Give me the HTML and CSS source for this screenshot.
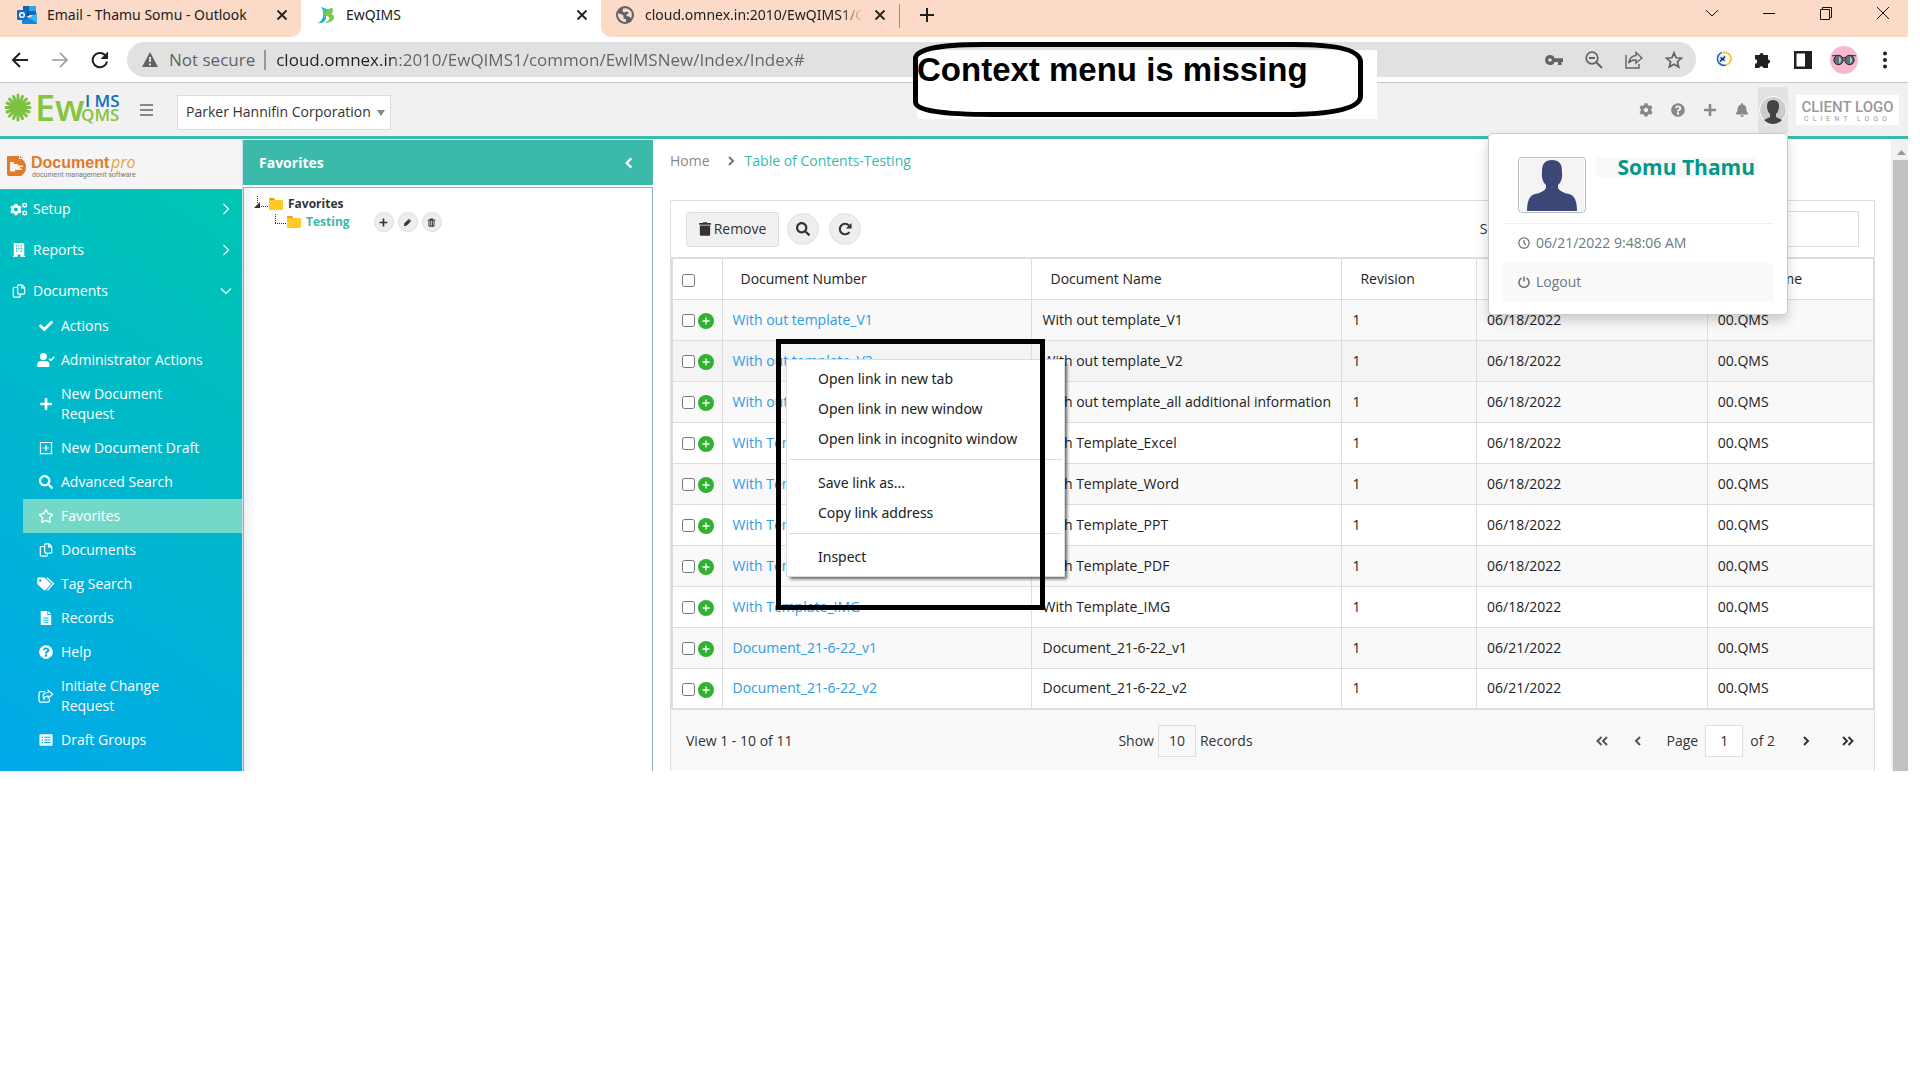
FILE: index.html
```html
<!DOCTYPE html>
<html lang="en">
<head>
    <meta charset="UTF-8">
    <meta name="viewport" content="width=device-width, initial-scale=1.0">
    <title>EwQIMS</title>
    <link rel="stylesheet" href="styles.css">
</head>
<body>
    <svg class="sprite" aria-hidden="true">
        <symbol id="i-plus" viewBox="0 0 448 512"><path d="M416 208H272V64c0-17.67-14.33-32-32-32h-32c-17.67 0-32 14.33-32 32v144H32c-17.67 0-32 14.33-32 32v32c0 17.67 14.33 32 32 32h144v144c0 17.67 14.33 32 32 32h32c17.67 0 32-14.33 32-32V304h144c17.67 0 32-14.33 32-32v-32c0-17.67-14.33-32-32-32z"/></symbol>
        <symbol id="i-check" viewBox="0 0 512 512"><path d="M173.898 439.404l-166.4-166.4c-9.997-9.997-9.997-26.206 0-36.204l36.203-36.204c9.997-9.998 26.207-9.998 36.204 0L192 312.69 432.095 72.596c9.997-9.997 26.207-9.997 36.204 0l36.203 36.204c9.997 9.997 9.997 26.206 0 36.204l-294.4 294.401c-9.998 9.997-26.207 9.997-36.204-.001z"/></symbol>
        <symbol id="i-search" viewBox="0 0 512 512"><path d="M505 442.7L405.3 343c-4.5-4.5-10.6-7-17-7H372c27.6-35.3 44-79.7 44-128C416 93.1 322.9 0 208 0S0 93.1 0 208s93.1 208 208 208c48.3 0 92.7-16.4 128-44v16.3c0 6.4 2.5 12.5 7 17l99.7 99.7c9.4 9.4 24.6 9.4 33.9 0l28.3-28.3c9.4-9.4 9.4-24.6.1-34zM208 336c-70.7 0-128-57.2-128-128 0-70.7 57.2-128 128-128 70.7 0 128 57.2 128 128 0 70.7-57.2 128-128 128z"/></symbol>
        <symbol id="i-help" viewBox="0 0 512 512"><path d="M504 256c0 136.997-111.043 248-248 248S8 392.997 8 256C8 119.083 119.043 8 256 8s248 111.083 248 248zM262.655 90c-54.497 0-89.255 22.957-116.549 63.758-3.536 5.286-2.353 12.415 2.715 16.258l34.699 26.31c5.205 3.947 12.621 3.008 16.665-2.122 17.864-22.658 30.113-35.797 57.303-35.797 20.429 0 45.698 13.148 45.698 32.958 0 14.976-12.363 22.667-32.534 33.976C247.128 238.528 216 254.941 216 296v4c0 6.627 5.373 12 12 12h56c6.627 0 12-5.373 12-12v-1.333c0-28.462 83.186-29.647 83.186-106.667 0-58.002-60.165-102-116.531-102zM256 338c-25.365 0-46 20.635-46 46 0 25.364 20.635 46 46 46s46-20.636 46-46c0-25.365-20.635-46-46-46z"/></symbol>
        <symbol id="i-cog" viewBox="0 0 512 512"><path d="M487.4 315.7l-42.6-24.6c4.3-23.2 4.3-47 0-70.2l42.6-24.6c4.9-2.8 7.1-8.6 5.5-14-11.1-35.6-30-67.8-54.7-94.6-3.8-4.1-10-5.1-14.8-2.3L380.8 110c-17.9-15.4-38.5-27.3-60.8-35.1V25.8c0-5.6-3.9-10.5-9.4-11.7-36.7-8.2-74.3-7.8-109.2 0-5.5 1.2-9.4 6.1-9.4 11.7V75c-22.2 7.9-42.8 19.8-60.8 35.1L88.7 85.5c-4.9-2.8-11-1.9-14.8 2.3-24.7 26.7-43.6 58.9-54.7 94.6-1.7 5.4.6 11.2 5.5 14L67.3 221c-4.3 23.2-4.3 47 0 70.2l-42.6 24.6c-4.9 2.8-7.1 8.6-5.5 14 11.1 35.6 30 67.8 54.7 94.6 3.8 4.1 10 5.1 14.8 2.3l42.6-24.6c17.9 15.4 38.5 27.3 60.8 35.1v49.2c0 5.6 3.9 10.5 9.4 11.7 36.7 8.2 74.3 7.8 109.2 0 5.5-1.2 9.4-6.1 9.4-11.7v-49.2c22.2-7.9 42.8-19.8 60.8-35.1l42.6 24.6c4.9 2.8 11 1.9 14.8-2.3 24.7-26.7 43.6-58.9 54.7-94.6 1.5-5.5-.7-11.3-5.6-14.1zM256 336c-44.1 0-80-35.9-80-80s35.9-80 80-80 80 35.9 80 80-35.9 80-80 80z"/></symbol>
        <symbol id="i-bell" viewBox="0 0 448 512"><path d="M224 512c35.32 0 63.97-28.65 63.97-64H160.03c0 35.35 28.65 64 63.97 64zm215.39-149.71c-19.32-20.76-55.47-51.99-55.47-154.29 0-77.7-54.48-139.9-127.94-155.16V32c0-17.67-14.32-32-31.98-32s-31.98 14.33-31.98 32v20.84C118.56 68.1 64.08 130.3 64.08 208c0 102.3-36.15 133.53-55.47 154.29-6 6.45-8.66 14.16-8.61 21.71.11 16.4 12.98 32 32.1 32h383.8c19.12 0 32-15.6 32.1-32 .05-7.55-2.61-15.27-8.61-21.71z"/></symbol>
        <symbol id="i-star" viewBox="0 0 576 512"><path d="M528.1 171.5L382 150.2 316.7 17.8c-11.7-23.6-45.6-23.9-57.4 0L194 150.2 47.9 171.5c-26.2 3.8-36.7 36.1-17.7 54.6l105.7 103-25 145.5c-4.5 26.3 23.2 46 46.4 33.7L288 439.6l130.7 68.7c23.2 12.2 50.9-7.4 46.4-33.7l-25-145.5 105.7-103c19-18.5 8.5-50.8-17.7-54.6zM388.6 312.3l23.7 138.4L288 385.4l-124.3 65.3 23.7-138.4-100.6-98 139-20.2 62.2-126 62.2 126 139 20.2-100.6 98z"/></symbol>
        <symbol id="i-trash" viewBox="0 0 448 512"><path d="M32 464a48 48 0 0 0 48 48h288a48 48 0 0 0 48-48V128H32zM432 32H312l-9.4-18.7A24 24 0 0 0 281.1 0H166.8a23.72 23.72 0 0 0-21.4 13.3L136 32H16A16 16 0 0 0 0 48v32a16 16 0 0 0 16 16h416a16 16 0 0 0 16-16V48a16 16 0 0 0-16-16z"/></symbol>
        <symbol id="i-bin" viewBox="0 0 12 12"><path d="M1 2h10v1.500H1zM4 .5h4V2H4z"/><path d="M2.600 4v7h6.800V4M4.900 4v7M7.200 4v7" fill="none" stroke="currentColor" stroke-width="1.300"/></symbol>
        <symbol id="i-pencil" viewBox="0 0 12 12"><path d="M1 11l1-4 6-6 3 3-6 6z"/><path d="M7 2l3 3" stroke="#eee" stroke-width=".8"/></symbol>
        <symbol id="i-cogs" viewBox="0 0 20 16"><path fill-rule="evenodd" d="M5 2h3l.4 1.8 1.3.7L11.500 4l1.500 2.500-1.300 1.300v1.400l1.300 1.300-1.500 2.500-1.800-.5-1.300.7L8 15H5l-.4-1.800-1.300-.7L1.500 13 0 10.500l1.300-1.300V7.800L0 6.500 1.500 4l1.800.5 1.300-.7zM6.500 6.200a2.300 2.300 0 1 0 0 4.600 2.300 2.300 0 0 0 0-4.600zM16.500.5l1 .9 1.300-.1.6 1.300-.8 1 .8 1.100-.6 1.300-1.300-.1-1 .9-1-.9-1.300.1-.6-1.300.8-1.100-.8-1 .6-1.300 1.300.1zm0 2a1.200 1.200 0 1 0 0 2.400 1.200 1.200 0 0 0 0-2.400zM16.500 9.500l1 .9 1.300-.1.6 1.300-.8 1 .8 1.100-.6 1.300-1.300-.1-1 .9-1-.9-1.300.1-.6-1.300.8-1.100-.8-1 .6-1.300 1.300.1zm0 2a1.200 1.200 0 1 0 0 2.400 1.200 1.200 0 0 0 0-2.400z"/></symbol>
        <symbol id="i-building" viewBox="0 0 14 16"><path fill-rule="evenodd" d="M1 0h12v14.500h1V16H8.500v-3h-3v3H0v-1.500h1zM3.500 2.500V4H5V2.500zm5.500 0V4h1.500V2.500zM3.500 5.500V7H5V5.500zm5.500 0V7h1.500V5.500zM3.500 8.500V10H5V8.500zm5.500 0V10h1.500V8.500zM6.300 2.500V4h1.400V2.500zM6.300 5.500V7h1.400V5.500z"/></symbol>
        <symbol id="i-copy" viewBox="0 0 16 16"><path d="M6.500 1h5L14.500 4v6.500q0 1-1 1h-6q-1 0-1-1V2q0-1 1-1zM11 1v3.500h3.500M6 4H2.500q-1 0-1 1v9q0 1 1 1h6q1 0 1-1v-2" fill="none" stroke="currentColor" stroke-width="1.400"/></symbol>
        <symbol id="i-usercheck" viewBox="0 0 20 16"><path d="M7 0a4 4 0 1 1 0 8 4 4 0 0 1 0-8zM0 16v-2.500A4.500 4.500 0 0 1 4.500 9h5a4.500 4.500 0 0 1 4.500 4.500V16z"/><path d="M13.500 6.500l2 2 4-4.200" fill="none" stroke="currentColor" stroke-width="1.800"/></symbol>
        <symbol id="i-addbox" viewBox="0 0 16 16"><path d="M1.700 1.700h12.600v12.600H1.700zM8 4.500v7M4.500 8h7" fill="none" stroke="currentColor" stroke-width="1.400"/></symbol>
        <symbol id="i-tags" viewBox="0 0 20 16"><path fill-rule="evenodd" d="M0 1.500Q0 .5 1 .5h6.500l1 .4 7 6.400q.8.700 0 1.400l-6.200 6.400q-.8.700-1.500 0L.5 8.500 0 7.500zM3.500 2.500a1.400 1.400 0 1 0 0 2.800 1.400 1.400 0 0 0 0-2.800z"/><path d="M11 .8l7.500 6.800-6.800 7.600" fill="none" stroke="currentColor" stroke-width="1.400"/></symbol>
        <symbol id="i-file" viewBox="0 0 14 16"><path fill-rule="evenodd" d="M1 0h7.500v4.500H13V16H1zM4 7.500v1h6v-1zm0 2.500v1h6v-1zm0 2.500v1h6v-1z"/><path d="M9.500 0L13 3.500H9.500z"/></symbol>
        <symbol id="i-share" viewBox="0 0 18 16"><path d="M8 3H3Q1 3 1 5v8q0 2 2 2h8q2 0 2-2v-1.500" fill="none" stroke="currentColor" stroke-width="1.500"/><path d="M11.500 1.500l5.200 4.500-5.200 4.500V8q-4-.2-5 3.500Q3 4.500 11.500 4z" fill="none" stroke="currentColor" stroke-width="1.300"/></symbol>
        <symbol id="i-list" viewBox="0 0 16 16"><path fill-rule="evenodd" d="M1.500 1.500h13q1 0 1 1v11q0 1-1 1h-13q-1 0-1-1v-11q0-1 1-1zM3 4.300v1.500h1.600V4.300zm3 0v1.200h7.500V4.300zM3 7.300v1.500h1.600V7.300zm3 0v1.200h7.500V7.300zM3 10.300v1.500h1.600v-1.500zm3 0v1.200h7.500v-1.200z"/></symbol>
        <symbol id="i-right" viewBox="0 0 12 12"><path d="M3.500 1l5 5-5 5" fill="none" stroke="currentColor" stroke-width="1.100"/></symbol>
        <symbol id="i-rightb" viewBox="0 0 12 12"><path d="M4 2l4 4-4 4" fill="none" stroke="currentColor" stroke-width="2"/></symbol>
        <symbol id="i-leftb" viewBox="0 0 12 12"><path d="M8 2L4 6l4 4" fill="none" stroke="currentColor" stroke-width="2"/></symbol>
        <symbol id="i-last" viewBox="0 0 14 12"><path d="M2 2l4 4-4 4M7.500 2l4 4-4 4" fill="none" stroke="currentColor" stroke-width="2"/></symbol>
        <symbol id="i-first" viewBox="0 0 14 12"><path d="M6.500 2l-4 4 4 4M12 2L8 6l4 4" fill="none" stroke="currentColor" stroke-width="2"/></symbol>
        <symbol id="i-down" viewBox="0 0 12 12"><path d="M1 3.500l5 5 5-5" fill="none" stroke="currentColor" stroke-width="1.100"/></symbol>
        <symbol id="i-x" viewBox="0 0 12 12"><path d="M1.500 1.500l9 9M10.500 1.500l-9 9" fill="none" stroke="currentColor" stroke-width="1.800"/></symbol>
        <symbol id="i-reload" viewBox="0 0 18 18"><path d="M16 10.500A7.200 7.200 0 1 1 14 4" fill="none" stroke="currentColor" stroke-width="2"/><path d="M17 .5V8H9.500z"/></symbol>
        <symbol id="i-redo" viewBox="0 0 16 16"><path d="M13 11.500A6 6 0 1 1 12.500 4" fill="none" stroke="currentColor" stroke-width="2.400"/><path d="M15.500 1v6.500H9z"/></symbol>
        <symbol id="i-back" viewBox="0 0 18 18"><path d="M17 9H2.500M9 2L2 9l7 7" fill="none" stroke="currentColor" stroke-width="2"/></symbol>
        <symbol id="i-forward" viewBox="0 0 18 18"><path d="M1 9h14.500M9 2l7 7-7 7" fill="none" stroke="currentColor" stroke-width="1.600"/></symbol>
        <symbol id="i-folder" viewBox="0 0 14 12"><path fill="#f59b14" d="M0 1q0-1 1-1h4l1.500 2H13v3H0z"/><path fill="#ffc928" d="M0 2h13q1 0 1 1v8q0 1-1 1H1q-1 0-1-1z"/></symbol>
    </svg>

    <div class="page">
        <div class="tabstrip">
            <div class="tab tab-first">
                <svg class="fav" viewBox="0 0 20 18"><path fill="#1066b5" d="M6 0h13v9H6z"/><path fill="#28a8ea" d="M12 0h7v5h-7z"/><path fill="#0a4f96" d="M6 5h6v5H6z"/><path fill="#1487d4" d="M5 9l8 3 7-5v10q0 1-1 1H6q-1 0-1-1z"/><path fill="#35b8f1" d="M20 7v10l-8-5z"/><rect y="4" width="10" height="10" rx="1" fill="#0f6fc6"/><circle cx="5" cy="9" r="2.300" fill="none" stroke="#fff" stroke-width="1.500"/></svg>
                <span class="tab-title">Email - Thamu Somu - Outlook</span>
                <button class="tab-close" aria-label="Close tab"><svg><use href="#i-x"/></svg></button>
            </div>
            <div class="tab tab-active">
                <svg class="fav" viewBox="0 0 18 20"><path d="M1 0q5 2 5 8 0 8-6 11 7 1 9-5V3Q5 2 1 0z" fill="#16b5d8"/><path d="M5 2q5 3 11 0-1 5-9 6z" fill="#2cc6a8"/><path d="M7 8q4-4 9-6 2 4-1 7 3 1 3 5-3 5-11 5 5-2 6-5 0-2-3-3-2 0-3 3z" fill="#7cc850"/></svg>
                <span class="tab-title">EwQIMS</span>
                <button class="tab-close" aria-label="Close tab"><svg><use href="#i-x"/></svg></button>
            </div>
            <div class="tab tab-last">
                <svg class="fav" viewBox="0 0 18 18"><circle cx="9" cy="9" r="9" fill="#5f6368"/><path fill="#fcdac8" d="M2 7q2 1 4 1.500T7.500 11 10 13v3q-6 0-8-6zM7 2.500Q12 1 15.500 6q1 4-.5 6l-2-1.500-2.500-.5V8.500L13 7l-2-1.500-3 1L6.500 5z"/></svg>
                <span class="tab-title fade">cloud.omnex.in:2010/EwQIMS1/C</span>
                <button class="tab-close" aria-label="Close tab"><svg><use href="#i-x"/></svg></button>
            </div>
            <button class="new-tab" aria-label="New tab"><svg viewBox="0 0 16 16"><path d="M8 1v14M1 8h14" stroke="#202124" stroke-width="2"/></svg></button>
            <div class="window-buttons">
                <button aria-label="Search tabs"><svg viewBox="0 0 14 14"><path d="M1 4l6 6 6-6"/></svg></button>
                <button aria-label="Minimize"><svg viewBox="0 0 14 14"><path d="M1 7.500h12"/></svg></button>
                <button aria-label="Restore"><svg viewBox="0 0 14 14"><path d="M1.500 3.500h9v10h-9zM3.500 3V1.500h9v10H11"/></svg></button>
                <button aria-label="Close"><svg viewBox="0 0 14 14"><path d="M1 1l12 12M13 1L1 13"/></svg></button>
            </div>
        </div>

        <div class="toolbar">
            <div class="nav-buttons">
                <button aria-label="Back"><svg><use href="#i-back"/></svg></button>
                <button class="off" aria-label="Forward"><svg><use href="#i-forward"/></svg></button>
                <button aria-label="Reload"><svg><use href="#i-reload"/></svg></button>
            </div>
            <div class="omnibox">
                <svg class="warn" viewBox="0 0 16 15"><path fill="#5f6368" d="M8 0l8 15H0z"/><path d="M8 5v5M8 11.500v2" stroke="#fff" stroke-width="1.600"/></svg>
                <span class="not-secure">Not secure</span>
                <input class="url" aria-label="Address" value="cloud.omnex.in:2010/EwQIMS1/common/EwIMSNew/Index/Index#">
                <div class="omni-icons">
                    <button aria-label="Passwords"><svg viewBox="0 0 18 18"><path fill="currentColor" fill-rule="evenodd" d="M5 4a5 5 0 0 1 4.700 3.200H18V11h-1.500v3h-3.500v-3H9.700A5 5 0 1 1 5 4zm0 3.200a1.800 1.800 0 1 0 0 3.600 1.800 1.800 0 0 0 0-3.600z"/></svg></button>
                    <button aria-label="Zoom out"><svg viewBox="0 0 18 18"><path d="M11.500 11.500l5.500 5.500M4 7h6" stroke="currentColor" stroke-width="2"/><circle cx="7" cy="7" r="5.800" fill="none" stroke="currentColor" stroke-width="1.700"/></svg></button>
                    <button aria-label="Share"><svg viewBox="0 0 18 18"><path d="M1 4v13h13v-4M11 1.500L17 7l-6 5V9q-5-.5-7.500 3Q5 5 11 4.500z" fill="none" stroke="currentColor" stroke-width="1.400"/></svg></button>
                    <button aria-label="Bookmark"><svg viewBox="0 0 18 18"><path d="M9 1.800l2.100 5 5.400.4-4.100 3.500 1.300 5.300L9 13.200 4.300 16l1.300-5.300-4.100-3.500 5.400-.4z" fill="none" stroke="currentColor" stroke-width="1.700"/></svg></button>
                </div>
            </div>
            <div class="extensions">
                <button aria-label="Extension"><svg viewBox="0 0 18 18"><path d="M8 1.500A6.500 6.500 0 1 0 12 14" fill="none" stroke="#3367d6" stroke-width="1.800"/><path d="M9 1.500A6.500 6.500 0 0 1 12.500 14" fill="none" stroke="#fbc02d" stroke-width="1.800"/><circle cx="8.500" cy="8" r="4" fill="#c5ecf5"/><path d="M6 10.500l5-5M6.500 6.500l4 3" stroke="#222" stroke-width="1.200"/></svg></button>
                <button aria-label="Extensions"><svg viewBox="0 0 18 18"><path fill="#202124" d="M1 4h4.500a2 2 0 1 1 4 0H14v4.500a2 2 0 1 1 0 4.200V17h-4.500a2.200 2.200 0 0 0-4.300 0H1v-4.300a2.200 2.200 0 0 0 0-4.400z"/></svg></button>
                <button aria-label="Side panel"><svg viewBox="0 0 18 18"><path fill="#202124" fill-rule="evenodd" d="M0 0h18v18H0zM2.500 2.500v13H11v-13z"/></svg></button>
                <button class="profile" aria-label="Profile"><svg viewBox="0 0 28 28"><circle cx="14" cy="14" r="14" fill="#f8b8cf"/><path d="M2 10q3-1 6 0M26 10q-3-1-6 0M12 12q2-1 4 0" fill="none" stroke="#333" stroke-width="1.200"/><circle cx="8.500" cy="14" r="4.700" fill="#607078" stroke="#222"/><circle cx="19.500" cy="14" r="4.700" fill="#607078" stroke="#222"/><path d="M9 10.500a4 4 0 0 1 0 7zM20 10.500a4 4 0 0 1 0 7z" fill="#b4c4ca"/></svg></button>
                <button aria-label="Menu"><svg viewBox="0 0 18 18"><circle cx="9" cy="2.500" r="2"/><circle cx="9" cy="9" r="2"/><circle cx="9" cy="15.500" r="2"/></svg></button>
            </div>
        </div>

        <div class="app-header">
            <a class="logo" href="#">
                <svg viewBox="0 0 120 36">
                    <g stroke="#7cc142" stroke-width="3" stroke-linecap="round"><path d="M14 3v25M2 15.500h24M5.500 7l17 17M22.500 7l-17 17M9.500 4.500l9 22M18.500 4.500l-9 22M3 11l22 9M3 20l22-9"/></g>
                    <text x="31" y="29" class="logo-ew">Ew</text>
                    <text x="81" y="15" class="logo-ims">I MS</text>
                    <text x="77" y="29" class="logo-qms">QMS</text>
                </svg>
            </a>
            <button class="burger" aria-label="Toggle menu"><svg viewBox="0 0 13 12"><path d="M0 1h13M0 6h13M0 11h13" stroke="#888" stroke-width="2"/></svg></button>
            <div class="company">
                <select aria-label="Company"><option>Parker Hannifin Corporation</option></select>
            </div>
            <div class="header-icons">
                <button aria-label="Settings"><svg><use href="#i-cog"/></svg></button>
                <button aria-label="Help"><svg><use href="#i-help"/></svg></button>
                <button aria-label="Add"><svg><use href="#i-plus"/></svg></button>
                <button aria-label="Notifications"><svg><use href="#i-bell"/></svg></button>
            </div>
            <div class="user">
                <button class="user-button" aria-label="User"><svg viewBox="0 0 28 28"><circle cx="14" cy="14" r="13.500" fill="#ccc" stroke="#fff"/><path fill="#444" d="M8 10q0-6 6-6t6 6q0 5-3 8v3l6 3q-4 4-9 4t-9-4l6-3v-3q-3-3-3-8z"/></svg></button>
                <div class="user-menu">
                    <div class="user-top">
                        <svg class="photo" viewBox="0 0 64 52"><rect width="64" height="52" fill="#f4f4f4"/><path fill="#3b4877" d="M22 12q0-11 10-11t10 11q1 10-4 14v3q2 4 11 6 8 2 8 17H7q0-15 8-17 9-2 11-6v-3q-5-4-4-14z"/></svg>
                        <div class="user-name">Somu Thamu</div>
                    </div>
                    <div class="user-time">
                        <svg viewBox="0 0 12 12"><circle cx="6" cy="6" r="5.200" fill="none" stroke="#6b7a7f" stroke-width="1.300"/><path d="M6 3v3l2 2" fill="none" stroke="#6b7a7f" stroke-width="1.300"/></svg>
                        06/21/2022 9:48:06 AM
                    </div>
                    <a class="logout" href="#">
                        <svg viewBox="0 0 12 12"><path d="M3.500 2a5 5 0 1 0 5 0M6 .5v5" fill="none" stroke="#6b7a7f" stroke-width="1.600"/></svg>
                        Logout
                    </a>
                </div>
            </div>
            <div class="client-logo">
                <div class="client-big">CLIENT LOGO</div>
                <div class="client-small">CLIENT LOGO</div>
            </div>
        </div>

        <div class="layout">
            <div class="sidebar">
                <div class="product">
                    <svg viewBox="0 0 140 26">
                        <path fill="#e07a2c" d="M1 2h12v3h3q4 3 4 8 0 6-5 9H3q-2 0-2-2z"/><path fill="#e07a2c" d="M14 2l3 2h-3z"/><path fill="#fff" d="M4 8h4v2h4v1.500h5V13h-3v1.500h2V16H9v1.500H4z" opacity=".9"/>
                        <text x="25" y="14" class="doc">Document</text>
                        <text x="105" y="14" class="pro">pro</text>
                        <text x="26" y="23" class="sub">document management software</text>
                    </svg>
                </div>
                <div class="menu">
                    <a class="menu-item" href="#"><svg><use href="#i-cogs"/></svg><span>Setup</span><svg class="arrow"><use href="#i-right"/></svg></a>
                    <a class="menu-item" href="#"><svg><use href="#i-building"/></svg><span>Reports</span><svg class="arrow"><use href="#i-right"/></svg></a>
                    <a class="menu-item" href="#"><svg><use href="#i-copy"/></svg><span>Documents</span><svg class="arrow"><use href="#i-down"/></svg></a>
                </div>
                <div class="submenu">
                    <a href="#"><svg><use href="#i-check"/></svg><span>Actions</span></a>
                    <a href="#"><svg><use href="#i-usercheck"/></svg><span>Administrator Actions</span></a>
                    <a href="#"><svg><use href="#i-plus"/></svg><span>New Document Request</span></a>
                    <a href="#"><svg><use href="#i-addbox"/></svg><span>New Document Draft</span></a>
                    <a href="#"><svg><use href="#i-search"/></svg><span>Advanced Search</span></a>
                    <a class="active" href="#"><svg><use href="#i-star"/></svg><span>Favorites</span></a>
                    <a href="#"><svg><use href="#i-copy"/></svg><span>Documents</span></a>
                    <a href="#"><svg><use href="#i-tags"/></svg><span>Tag Search</span></a>
                    <a href="#"><svg><use href="#i-file"/></svg><span>Records</span></a>
                    <a href="#"><svg><use href="#i-help"/></svg><span>Help</span></a>
                    <a href="#"><svg><use href="#i-share"/></svg><span>Initiate Change Request</span></a>
                    <a href="#"><svg><use href="#i-list"/></svg><span>Draft Groups</span></a>
                </div>
            </div>

            <div class="tree-panel">
                <div class="tree-header">
                    <span>Favorites</span>
                    <button aria-label="Collapse"><svg><use href="#i-leftb"/></svg></button>
                </div>
                <div class="tree">
                    <div class="node">
                        <svg class="branch" viewBox="0 0 15 16"><path d="M3.500 0v8M7 10.500h8" stroke="#333" stroke-dasharray="1 1"/><path d="M6 6v6H0z" fill="#333"/></svg>
                        <svg class="folder"><use href="#i-folder"/></svg>
                        <span>Favorites</span>
                    </div>
                    <div class="node child">
                        <svg class="branch" viewBox="0 0 15 16"><path d="M3.500 0v9M3 9.500h12" stroke="#333" stroke-dasharray="1 1"/></svg>
                        <svg class="folder"><use href="#i-folder"/></svg>
                        <a href="#">Testing</a>
                        <div class="node-buttons">
                            <button aria-label="Add folder"><svg><use href="#i-plus"/></svg></button>
                            <button aria-label="Edit folder"><svg><use href="#i-pencil"/></svg></button>
                            <button aria-label="Delete folder"><svg><use href="#i-bin"/></svg></button>
                        </div>
                    </div>
                </div>
            </div>

            <div class="content">
                <div class="breadcrumb">
                    <a href="#">Home</a>
                    <svg><use href="#i-rightb"/></svg>
                    <span>Table of Contents-Testing</span>
                </div>
                <div class="grid">
                    <div class="grid-tools">
                        <button class="remove"><svg><use href="#i-trash"/></svg>Remove</button>
                        <button class="round" aria-label="Search"><svg><use href="#i-search"/></svg></button>
                        <button class="round" aria-label="Refresh"><svg><use href="#i-redo"/></svg></button>
                        <div class="search">
                            <label for="search">Search</label>
                            <input id="search" type="text">
                        </div>
                    </div>
                    <table>
                        <thead>
                            <tr><th class="c-check"><input type="checkbox" aria-label="Select all"></th><th class="c-num">Document Number</th><th class="c-name">Document Name</th><th class="c-rev">Revision</th><th class="c-date">Date</th><th>Level Name</th></tr>
                        </thead>
                        <tbody id="rows"></tbody>
                    </table>
                    <div class="grid-footer">
                        <div class="view">View 1 - 10 of 11</div>
                        <div class="show"><label for="size">Show</label><input id="size" value="10"><span>Records</span></div>
                        <div class="pager">
                            <button class="dim" aria-label="First page"><svg><use href="#i-first"/></svg></button>
                            <button class="dim" aria-label="Previous page"><svg><use href="#i-leftb"/></svg></button>
                            <label for="pg">Page</label>
                            <input id="pg" value="1">
                            <span>of 2</span>
                            <button aria-label="Next page"><svg><use href="#i-rightb"/></svg></button>
                            <button aria-label="Last page"><svg><use href="#i-last"/></svg></button>
                        </div>
                    </div>
                    <div class="context-menu">
                        <button>Open link in new tab</button>
                        <button>Open link in new window</button>
                        <button>Open link in incognito window</button>
                        <hr>
                        <button>Save link as...</button>
                        <button>Copy link address</button>
                        <hr>
                        <button>Inspect</button>
                    </div>
                    <div class="marker"></div>
                </div>
            </div>

            <div class="scrollbar">
                <svg viewBox="0 0 9 5"><path d="M0 5l4.500-5L9 5z" fill="#999"/></svg>
                <div class="thumb"></div>
            </div>
        </div>

        <div class="note">
            Context menu is missing
            <svg viewBox="0 0 450 75"><path d="M2.500 18Q0 2.500 70 2.500H380Q447.500 2.500 447.500 20V54Q447.500 72.500 370 72.500H80Q2.500 72.500 2.500 60z" fill="none" stroke="#000" stroke-width="5"/></svg>
        </div>
    </div>

    <script>
        const rows = [
            ['With out template_V1', '06/18/2022'],
            ['With out template_V2', '06/18/2022'],
            ['With out template_all additional information', '06/18/2022'],
            ['With Template_Excel', '06/18/2022'],
            ['With Template_Word', '06/18/2022'],
            ['With Template_PPT', '06/18/2022'],
            ['With Template_PDF', '06/18/2022'],
            ['With Template_IMG', '06/18/2022'],
            ['Document_21-6-22_v1', '06/21/2022'],
            ['Document_21-6-22_v2', '06/21/2022']
        ];

        document.getElementById('rows').innerHTML = rows.map(([name, date]) => `
            <tr>
                <td class="c-check"><input type="checkbox" aria-label="Select ${name}"><button class="expand" aria-label="Expand"><svg viewBox="0 0 16 16"><circle cx="8" cy="8" r="8" fill="#31b131"/><path d="M8 4.500v7M4.500 8h7" stroke="#fff" stroke-width="1.300"/></svg></button></td>
                <td><a href="#">${name}</a></td>
                <td>${name}</td>
                <td>1</td>
                <td>${date}</td>
                <td>00.QMS</td>
            </tr>`).join('');
    </script>
</body>
</html>
```
FILE: styles.css
```css
* {
    box-sizing: border-box;
}

body {
    margin: 0;
    background: #fff;
    color: #333;
    font-family: 'Open Sans', sans-serif;
    font-size: 14px;
    line-height: 20px;
}

button, input, select {
    font: inherit;
    color: inherit;
}

button {
    display: inline-flex;
    align-items: center;
    justify-content: center;
    padding: 0;
    border: 0;
    background: none;
}

a {
    color: inherit;
    text-decoration: none;
}

svg {
    display: block;
    flex: none;
    fill: currentColor;
}

.sprite {
    position: absolute;
    width: 0;
    height: 0;
}

.page {
    position: relative;
    margin-right: 12px;
}

/* browser tabs */
.tabstrip {
    display: flex;
    height: 37px;
    background: #fff;
    color: #202124;
}

.tab {
    display: flex;
    align-items: center;
    height: 37px;
    padding: 0 13px 8px 17px;
    background: #fcdac8;
    font-family: 'Noto Sans', sans-serif;
}

.tab-first {
    width: 301px;
    border-radius: 0 0 10px 0;
}

.tab-active {
    width: 300px;
    padding-left: 15px;
    background: #fff;
}

.tab-last {
    width: 298px;
    padding-left: 14px;
    border-radius: 0 0 0 10px;
}

.fav {
    width: 20px;
    height: 18px;
    margin-right: 10px;
}

.tab-title {
    flex: 1;
    overflow: hidden;
    white-space: nowrap;
}

.fade {
    mask-image: linear-gradient(90deg, #000 90%, transparent);
}

.tab-close {
    margin-left: 11px;
}

.tab-close svg {
    width: 12px;
    height: 12px;
}

.new-tab {
    width: 56px;
    padding-bottom: 8px;
    background: #fcdac8 linear-gradient(#9a8a82, #9a8a82) 0 4px / 1px 24px no-repeat;
}

.new-tab svg {
    width: 16px;
    height: 16px;
}

.window-buttons {
    flex: 1;
    display: flex;
    justify-content: flex-end;
    align-items: center;
    gap: 43px;
    padding: 0 18px 12px 0;
    background: #fcdac8;
}

.window-buttons svg {
    width: 14px;
    height: 14px;
    fill: none;
    stroke: #111;
}

/* address bar */
.toolbar {
    display: flex;
    align-items: center;
    height: 46px;
    padding: 0 14px 0 11px;
    border-bottom: 1px solid #c8c8c8;
    color: #202124;
}

.nav-buttons {
    display: flex;
    gap: 22px;
    width: 116px;
}

.nav-buttons svg {
    width: 18px;
    height: 18px;
}

.nav-buttons .off {
    color: #999;
}

.omnibox {
    flex: 1;
    display: flex;
    align-items: center;
    height: 35px;
    padding: 0 13px 0 15px;
    border-radius: 18px;
    background: #e1e1e1;
    color: #5f6368;
    font-size: 17px;
}

.warn {
    width: 16px;
    height: 15px;
    margin-right: 11px;
}

.not-secure {
    padding-right: 9px;
    border-right: 2px solid #999;
    white-space: nowrap;
}

.url {
    flex: 1;
    margin-left: 10px;
    padding: 0;
    border: 0;
    outline: 0;
    background: linear-gradient(90deg, #202124 119px, #5f6368 119px);
    background-clip: text;
    -webkit-text-fill-color: transparent;
}

.omni-icons {
    display: flex;
    gap: 22px;
}

.omni-icons svg,
.extensions svg {
    width: 18px;
    height: 18px;
}

.extensions {
    display: flex;
    align-items: center;
    gap: 22px;
    padding-left: 18px;
}

.extensions .profile {
    margin: 0 -4px;
}

.extensions .profile svg {
    width: 28px;
    height: 28px;
}

/* app header */
.app-header {
    display: flex;
    align-items: center;
    height: 56px;
    padding-right: 9px;
    background: #f1f1f1;
    border-bottom: 3px solid #3bb9ab;
}

.logo {
    width: 120px;
    margin-left: 4px;
}

.logo svg {
    width: 120px;
    height: 36px;
    overflow: visible;
}

.logo-ew {
    fill: #85c441;
    font: 600 36px 'Open Sans', sans-serif;
}

.logo-ims {
    fill: #0d70bb;
    font: 600 17px 'Open Sans', sans-serif;
}

.logo-qms {
    fill: #85c441;
    font: 600 17px 'Open Sans', sans-serif;
}

.burger {
    margin: 0 24px 0 16px;
}

.burger svg {
    width: 13px;
    height: 12px;
}

.company {
    display: flex;
    position: relative;
    margin-top: 5px;
}

.company select {
    width: 214px;
    height: 35px;
    padding: 0 8px;
    border: 1px solid #ddd;
    background: #fff;
    appearance: none;
}

.company::after {
    content: '';
    position: absolute;
    right: 6px;
    top: 15px;
    border: 4px solid transparent;
    border-top: 6px solid #888;
    pointer-events: none;
}

.header-icons {
    display: flex;
    gap: 18px;
    margin-left: auto;
    color: #888;
}

.header-icons svg {
    width: 14px;
    height: 14px;
}

.user {
    position: relative;
    margin: 0 8px 0 9px;
}

.user-button {
    width: 30px;
    height: 46px;
    background: #e2e2e2;
}

.user-button svg {
    width: 28px;
    height: 28px;
}

.user-menu {
    position: absolute;
    z-index: 2;
    top: 46px;
    right: 0;
    width: 300px;
    height: 182px;
    padding: 23px 14px 0;
    border: 1px solid #ccc;
    border-radius: 5px;
    background: #fff;
    box-shadow: 0 6px 12px rgba(0, 0, 0, 0.18);
    color: #6b7a7f;
}

.user-top {
    display: flex;
    justify-content: space-between;
    align-items: flex-start;
    height: 67px;
    padding: 0 18px 0 15px;
    border-bottom: 1px solid #eee;
}

.photo {
    width: 68px;
    height: 56px;
    padding: 1px;
    border: 1px solid #bbb;
    border-radius: 4px;
    background: #fff;
}

.user-name {
    padding-left: 21px;
    background: #faf9f8;
    color: #00998a;
    font-size: 21px;
    font-weight: 700;
}

.user-time,
.logout {
    display: flex;
    align-items: center;
    gap: 6px;
    height: 39px;
    padding-left: 15px;
}

.logout {
    background: #faf9f8;
}

.user-time svg,
.logout svg {
    width: 12px;
    height: 12px;
}

.client-logo {
    width: 103px;
    height: 30px;
    padding-top: 3px;
    background: #fff;
    color: #999;
    text-align: center;
    white-space: nowrap;
}

.client-big {
    font: 500 15px/18px Roboto, sans-serif;
}

.client-small {
    font: 7px/7px Roboto, sans-serif;
    letter-spacing: 4px;
}

/* page body */
.layout {
    display: flex;
    padding-top: 1px;
}

.sidebar {
    width: 242px;
    background: #00bcc8 linear-gradient(35deg, #00a9ea, #00b8cc 50%, #00c8ae);
    color: #fff;
    font-weight: 500;
}

.product {
    height: 50px;
    padding: 14px 0 0 6px;
    background: #f5f5f5;
    border-bottom: 1px solid #3bb9ab;
}

.product svg {
    width: 140px;
    height: 26px;
    overflow: visible;
}

.product .doc {
    fill: #e07a2c;
    font: bold 16px 'Liberation Sans', sans-serif;
}

.product .pro {
    fill: #e9a03b;
    font: italic 16px 'Open Sans', sans-serif;
}

.product .sub {
    fill: #777;
    font: 7px Roboto, sans-serif;
}

.menu-item {
    display: flex;
    align-items: center;
    height: 41px;
    padding: 0 10px 3px 9px;
}

.menu-item svg {
    width: 20px;
    height: 14px;
    margin-right: 4px;
}

.menu-item span {
    flex: 1;
}

.menu-item .arrow {
    width: 12px;
    height: 12px;
    margin: 0;
}

.submenu {
    margin-top: -4px;
    padding: 0 0 14px 23px;
}

.submenu a {
    display: flex;
    align-items: center;
    padding: 7px 60px 7px 14px;
    white-space: nowrap;
}

.submenu a:nth-child(3),
.submenu a:nth-child(11) {
    white-space: normal;
}

.submenu svg {
    width: 18px;
    height: 14px;
    margin-right: 6px;
}

.submenu .active {
    background: #74d8c8;
}

.tree-panel {
    display: flex;
    flex-direction: column;
    width: 411px;
    border-left: 1px solid #ccdcec;
}

.tree-header {
    display: flex;
    justify-content: space-between;
    align-items: center;
    height: 45px;
    padding: 0 17px 0 16px;
    background: #3bb9ab;
    color: #fff;
    font-weight: 700;
}

.tree-header svg {
    width: 14px;
    height: 14px;
}

.tree {
    flex: 1;
    margin-top: 2px;
    padding: 7px 10px;
    border: 1px solid #8fabcd;
    border-bottom: 0;
    box-shadow: inset 16px 0 14px -14px #e8e8e8;
    font-size: 12px;
    font-weight: 700;
}

.node {
    display: flex;
    align-items: center;
    height: 18px;
}

.child {
    padding-left: 18px;
    color: #3bb9ab;
}

.branch {
    width: 15px;
    height: 16px;
}

.folder {
    width: 14px;
    height: 12px;
    margin-right: 5px;
}

.node-buttons {
    display: flex;
    gap: 4px;
    margin-left: 24px;
}

.node-buttons button {
    width: 20px;
    height: 20px;
    border: 1px solid #ddd;
    border-radius: 50%;
    background: #eee;
    color: #333;
}

.node-buttons svg {
    width: 9px;
    height: 9px;
}

.content {
    flex: 1;
    padding: 10px 16px 0 17px;
}

.breadcrumb {
    display: flex;
    align-items: center;
    height: 22px;
    color: #888;
}

.breadcrumb svg {
    width: 12px;
    height: 12px;
    margin: 0 8px 0 15px;
    color: #777;
}

.breadcrumb span {
    color: #3bb9ab;
}

/* document grid */
.grid {
    position: relative;
    margin-top: 28px;
    border: 1px solid #ddd;
    border-bottom: 0;
}

.grid-tools {
    display: flex;
    align-items: center;
    height: 56px;
    padding: 0 15px;
}

.remove {
    width: 93px;
    height: 35px;
    margin-right: 8px;
    border: 1px solid #ddd;
    border-radius: 3px;
    background: #f1f1f1;
    gap: 3px;
}

.remove svg {
    width: 12px;
    height: 14px;
}

.round {
    width: 32px;
    height: 32px;
    margin-right: 10px;
    border: 1px solid #e0e0e8;
    border-radius: 50%;
    background: #eee;
}

.round svg {
    width: 14px;
    height: 14px;
}

.search {
    display: flex;
    align-items: center;
    gap: 18px;
    margin-left: auto;
}

.search input {
    width: 317px;
    height: 36px;
    border: 1px solid #ddd;
}

table {
    width: 100%;
    table-layout: fixed;
    border-collapse: collapse;
    border: 2px solid #ddd;
    border-width: 2px 1px 2px 2px;
    color: #222;
}

th, td {
    height: 41px;
    padding: 0 10px;
    border: 1px solid #ddd;
    text-align: left;
    white-space: nowrap;
}

th {
    padding-left: 18px;
    font-weight: 500;
}

tbody tr:nth-child(odd) {
    background: #f9f9f9;
}

tbody tr:nth-child(2) {
    background: #f4f4f4;
}

td a {
    color: #2f9be6;
}

.c-check {
    width: 50px;
    padding: 0 0 0 9px;
}

.c-num, .c-name {
    width: 25.8%;
}

.c-rev {
    width: 11.2%;
}

.c-date {
    width: 19.2%;
}

.c-check input {
    width: 13px;
    height: 13px;
    margin: 0 3px 0 0;
    vertical-align: middle;
}

.expand {
    vertical-align: middle;
}

.expand svg {
    width: 16px;
    height: 16px;
}

.grid-footer {
    display: flex;
    justify-content: space-between;
    align-items: center;
    height: 61px;
    padding: 0 15px;
    background: #f9f9f9;
}

.show {
    display: flex;
    align-items: center;
    gap: 4px;
    margin-right: 16px;
}

.show input,
.pager input {
    width: 38px;
    height: 32px;
    padding: 0;
    border: 1px solid #ddd;
    background: #f9f9f9;
    text-align: center;
}

.pager {
    display: flex;
    align-items: center;
}

.pager button {
    width: 14px;
    margin-right: 28px;
}

.pager button:last-child {
    margin-right: 4px;
}

.pager svg {
    width: 14px;
    height: 12px;
}

.pager .dim {
    margin-right: 22px;
    color: #555;
}

.pager input {
    margin: 0 7px;
    background: #fff;
}

.pager span {
    margin-right: 24px;
}

.context-menu {
    position: absolute;
    top: 158px;
    left: 115px;
    width: 279px;
    padding: 4px 2px;
    border: 1px solid #ddd;
    background: #fff;
    box-shadow: 3px 3px 3px -1px rgba(0, 0, 0, 0.6);
    color: #202124;
}

.context-menu button {
    display: block;
    width: 100%;
    height: 30px;
    padding-left: 29px;
    text-align: left;
    font-family: 'Noto Sans', sans-serif;
}

.context-menu hr {
    margin: 5px 0 8px;
    border: 0;
    border-top: 1px solid #ddd;
}

.marker {
    position: absolute;
    top: 138px;
    left: 105px;
    width: 269px;
    height: 271px;
    border: 5px solid #000;
}

.scrollbar {
    display: flex;
    flex-direction: column;
    width: 17px;
    padding: 10px 0 0 2px;
    background: #f1f1f1;
}

.scrollbar svg {
    width: 9px;
    height: 5px;
    margin: 0 0 5px 4px;
}

.thumb {
    flex: 1;
    background: #c1c1c1;
}

.note {
    position: absolute;
    top: 50px;
    left: 917px;
    width: 460px;
    height: 69px;
    background: #fff;
    color: #000;
    font: bold 33px/40px 'Liberation Sans', sans-serif;
}

.note svg {
    position: absolute;
    top: -8px;
    left: -4px;
    width: 450px;
    height: 75px;
}
```
